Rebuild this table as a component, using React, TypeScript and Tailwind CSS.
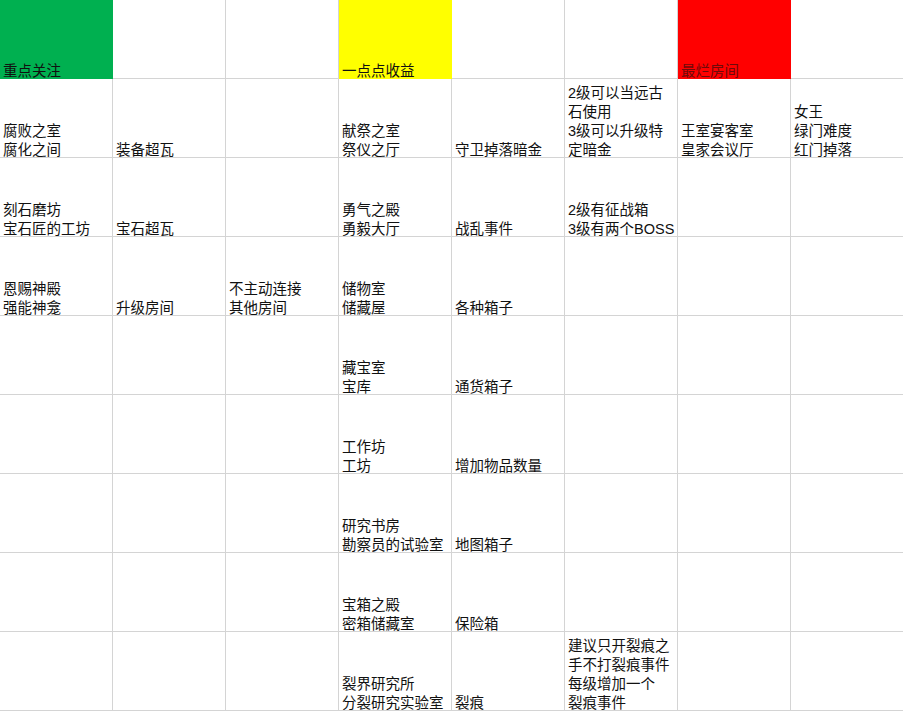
import React from "react";

type Cell = { text?: string; fill?: string; color?: string };

const G = "bg-[#00b050] border-[#00b050]";
const Y = "bg-[#ffff00] border-[#ffff00]";
const R = "bg-[#ff0000] border-[#ff0000]";

const rows: Cell[][] = [
    [
        { text: "重点关注", fill: G },
        {},
        {},
        { text: "一点点收益", fill: Y },
        {},
        {},
        { text: "最烂房间", fill: R, color: "text-[#6e0a0a]" },
        {},
    ],
    [
        { text: "腐败之室\n腐化之间" },
        { text: "装备超瓦" },
        {},
        { text: "献祭之室\n祭仪之厅" },
        { text: "守卫掉落暗金" },
        { text: "2级可以当远古\n石使用\n3级可以升级特\n定暗金" },
        { text: "王室宴客室\n皇家会议厅" },
        { text: "女王\n绿门难度\n红门掉落" },
    ],
    [
        { text: "刻石磨坊\n宝石匠的工坊" },
        { text: "宝石超瓦" },
        {},
        { text: "勇气之殿\n勇毅大厅" },
        { text: "战乱事件" },
        { text: "2级有征战箱\n3级有两个BOSS" },
        {},
        {},
    ],
    [
        { text: "恩赐神殿\n强能神龛" },
        { text: "升级房间" },
        { text: "不主动连接\n其他房间" },
        { text: "储物室\n储藏屋" },
        { text: "各种箱子" },
        {},
        {},
        {},
    ],
    [{}, {}, {}, { text: "藏宝室\n宝库" }, { text: "通货箱子" }, {}, {}, {}],
    [{}, {}, {}, { text: "工作坊\n工坊" }, { text: "增加物品数量" }, {}, {}, {}],
    [{}, {}, {}, { text: "研究书房\n勘察员的试验室" }, { text: "地图箱子" }, {}, {}, {}],
    [{}, {}, {}, { text: "宝箱之殿\n密箱储藏室" }, { text: "保险箱" }, {}, {}, {}],
    [
        {},
        {},
        {},
        { text: "裂界研究所\n分裂研究实验室" },
        { text: "裂痕" },
        { text: "建议只开裂痕之\n手不打裂痕事件\n每级增加一个\n裂痕事件" },
        {},
        {},
    ],
];

export default function App() {
    return (
        <div className="w-[903px] h-[711px] overflow-hidden bg-white font-['Liberation_Sans','Noto_Sans_CJK_SC',sans-serif] text-[14.5px] leading-[19px] text-[#111]">
            <div className="grid grid-cols-[repeat(8,113px)] auto-rows-[79px]">
                {rows.flatMap((row, r) =>
                    row.map((cell, c) => (
                        <div
                            key={r + "-" + c}
                            className={
                                "flex items-end overflow-hidden border-r border-b pl-[3px] " +
                                (cell.fill ?? "border-[#d4d4d4]") +
                                " " +
                                (cell.color ?? "")
                            }
                        >
                            {cell.text && (
                                <div className="mb-[-3px] whitespace-pre">{cell.text}</div>
                            )}
                        </div>
                    ))
                )}
            </div>
        </div>
    );
}
